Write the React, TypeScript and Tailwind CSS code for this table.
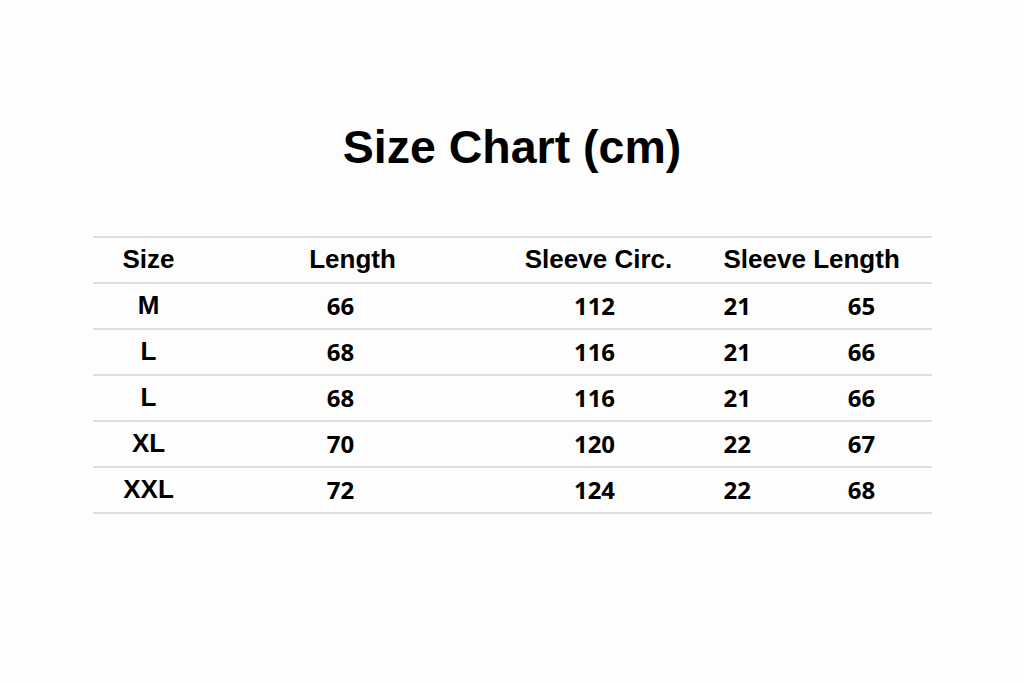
const rows = [
  { size: 'M', length: '66', circ: '112', a: '21', b: '65' },
  { size: 'L', length: '68', circ: '116', a: '21', b: '66' },
  { size: 'L', length: '68', circ: '116', a: '21', b: '66' },
  { size: 'XL', length: '70', circ: '120', a: '22', b: '67' },
  { size: 'XXL', length: '72', circ: '124', a: '22', b: '68' },
];

const arial = "font-['Liberation_Sans',Arial,sans-serif]";
const noto = "font-['Noto_Sans',sans-serif]";

export default function App() {
  return (
    <div className="w-[1024px] h-[683px] bg-[#fdfdfd] text-black flex flex-col items-center">
      {/* Title */}
      <h1 className={`${arial} mt-[124px] text-[46.5px] leading-none font-bold`}>Size Chart (cm)</h1>

      {/* Table */}
      <div className="mt-[65px] w-[839px] border-t-2 border-[#dedede]">
        {/* Header */}
        <div className={`${arial} h-[46px] flex items-center border-b-2 border-[#dedede] text-[26px] font-bold`}>
          <div className="w-[112px] text-center">Size</div>
          <div className="w-[296px] text-center">Length</div>
          <div className="w-[196px] text-center">Sleeve Circ.</div>
          <div className="pl-[27px]">Sleeve Length</div>
        </div>

        {/* Body */}
        {rows.map((r, i) => (
          <div key={i} className="h-[46px] flex items-center border-b-2 border-[#dedede] font-bold">
            <div className={`${arial} w-[112px] text-center text-[26px]`}>{r.size}</div>
            <div className={`${noto} w-[272px] text-center text-[24px]`}>{r.length}</div>
            <div className={`${noto} w-[236px] text-center text-[24px]`}>{r.circ}</div>
            <div className={`${noto} w-[88px] pl-[11px] text-[24px]`}>{r.a}</div>
            <div className={`${noto} w-[122px] text-center text-[24px]`}>{r.b}</div>
          </div>
        ))}
      </div>
    </div>
  );
}
